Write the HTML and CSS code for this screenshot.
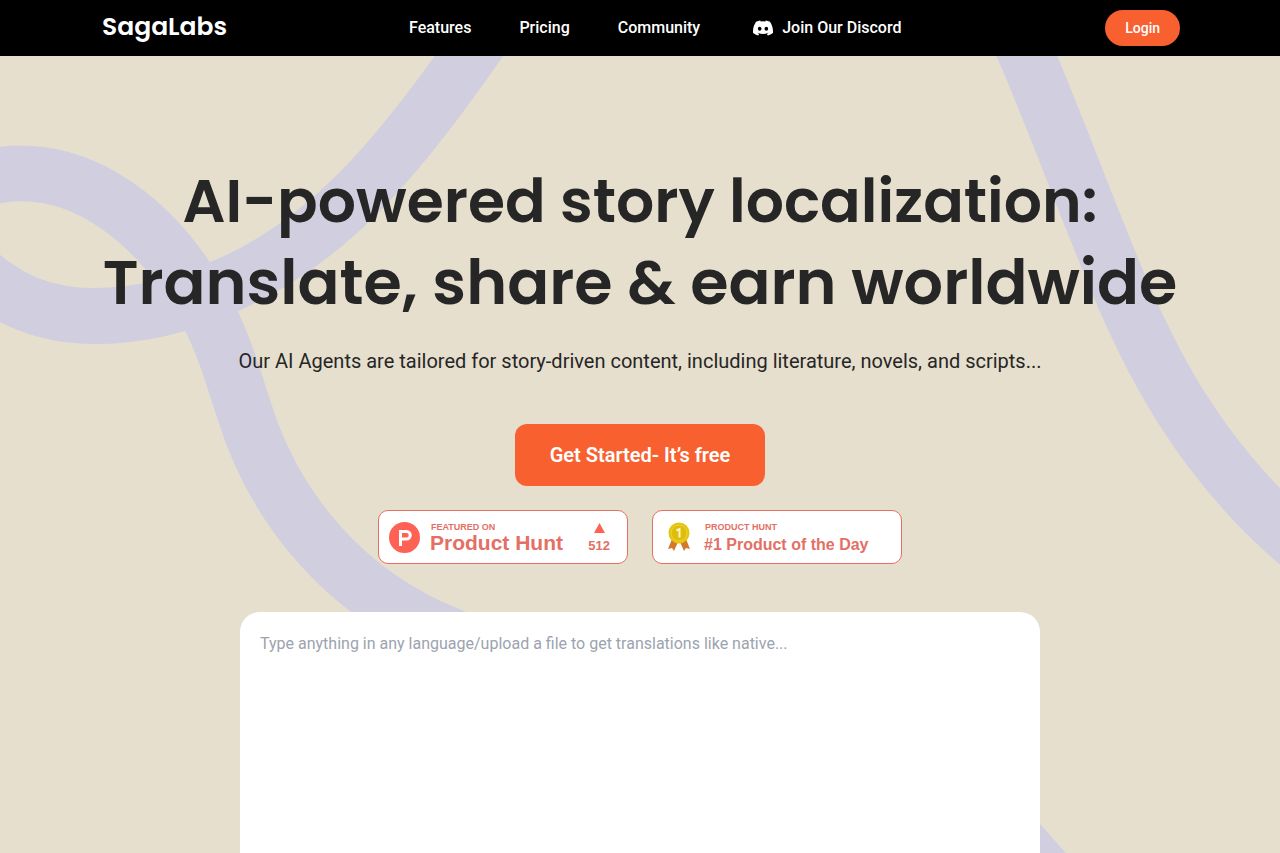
FILE: index.html
```
<!DOCTYPE html>
<html lang="en">
<head>
  <meta charset="UTF-8">
  <meta name="viewport" content="width=device-width, initial-scale=1">
  <title>SagaLabs</title>
  <link rel="stylesheet" href="styles.css">
</head>
<body>

  <header class="header">
    <a class="logo" href="#">SagaLabs</a>
    <nav class="nav">
      <a href="#">Features</a>
      <a href="#">Pricing</a>
      <a href="#">Community</a>
      <a class="discord" href="#">
        <svg width="20" height="16" viewBox="0 0 127 96" aria-hidden="true">
          <path fill="#fff" d="M107.700 8.070A105.150 105.150 0 0 0 81.470 0a72.060 72.060 0 0 0-3.360 6.830 97.680 97.680 0 0 0-29.110 0A72.370 72.370 0 0 0 45.640 0a105.890 105.890 0 0 0-26.250 8.090C2.790 32.650-1.710 56.600.540 80.210a105.730 105.730 0 0 0 32.170 16.150 77.700 77.700 0 0 0 6.890-11.110 68.420 68.420 0 0 1-10.850-5.180c.910-.660 1.800-1.340 2.660-2a75.570 75.570 0 0 0 64.320 0c.870.710 1.760 1.390 2.660 2a68.680 68.680 0 0 1-10.870 5.190 77 77 0 0 0 6.890 11.100 105.250 105.250 0 0 0 32.190-16.140c2.640-27.380-4.510-51.110-18.900-72.150zM42.450 65.690C36.180 65.690 31 60 31 53s5-12.740 11.430-12.740S54 46 53.890 53s-5.050 12.690-11.440 12.690zm42.240 0C78.410 65.690 73.250 60 73.250 53s5-12.740 11.440-12.740S96.230 46 96.120 53s-5.040 12.690-11.430 12.690z"/>
        </svg>
        Join Our Discord
      </a>
    </nav>
    <button class="login" type="button">Login</button>
  </header>

  <main class="hero">
    <svg class="ribbons" viewBox="0 56 1280 797" preserveAspectRatio="xMidYMin slice" aria-hidden="true">
      <g fill="none" stroke="#d1cfdf" stroke-width="56">
        <path d="M483 36L469 56C396 160 325 245 221 288C180 306 137 316 95 316C50 316 5 304 -40 255"/>
        <path d="M-20 178L0 175C80 163 162 220 212 322C228 355 234 381 244 410C270 495 330 580 430 627L470 644"/>
        <path d="M1018 36L1027 56C1056 125 1080 190 1107 256C1148 360 1200 460 1300 545"/>
        <path d="M990 810L1065 894"/>
      </g>
    </svg>

    <h1>
      <span class="line-top">AI-powered story localization:</span>
      <span>Translate, share &amp; earn worldwide</span>
    </h1>
    <p class="subtitle">Our AI Agents are tailored for story-driven content, including literature, novels, and scripts...</p>
    <button class="cta" type="button">Get Started- It’s free</button>

    <div class="badges">
      <a class="badge" href="#">
        <svg width="32" height="32" viewBox="0 0 32 32" aria-hidden="true">
          <circle cx="15.500" cy="15.500" r="15.500" fill="#ff6154"/>
          <path fill="#fff" fill-rule="evenodd" d="M10 8h7.500a5.250 5.250 0 0 1 0 10.500H13V24h-3zM13 11v4.500h4.500a2.250 2.250 0 0 0 0-4.500z"/>
        </svg>
        <span class="badge-text">
          <span class="badge-label">FEATURED ON</span>
          <span class="badge-name">Product Hunt</span>
        </span>
        <span class="votes">
          <svg width="11" height="10" viewBox="0 0 11 10" aria-hidden="true"><path d="M5.500 0L11 10H0z" fill="#ff6154"/></svg>
          512
        </span>
      </a>
      <a class="badge badge-day" href="#">
        <svg width="22" height="30" viewBox="0 0 22 30" aria-hidden="true">
          <path fill="#d5782a" d="M4 17L0 27l4-1 2 3 4-9zM18 17l4 10-4-1-2 3-4-9z"/>
          <circle cx="11" cy="11" r="10.500" fill="#e4c40d"/>
          <circle cx="11" cy="11" r="8" fill="#dfbd0b" stroke="#ead238"/>
          <path fill="none" stroke="#fff6c8" stroke-width="2" d="M8.500 8.500L11.500 7v8.500"/>
        </svg>
        <span class="badge-text">
          <span class="badge-label">PRODUCT HUNT</span>
          <span class="badge-name">#1 Product of the Day</span>
        </span>
      </a>
    </div>

    <textarea class="translate-box" aria-label="Text to translate" placeholder="Type anything in any language/upload a file to get translations like native..."></textarea>
  </main>

</body>
</html>
```
FILE: styles.css
```
:root {
  --accent: #f96030;
  --bg: #e6dfce;
  --text: #262626;
  --hunt: #e46f64;
}

* {
  box-sizing: border-box;
}

body {
  margin: 0;
  min-height: 100vh;
  display: flex;
  flex-direction: column;
  font-family: Roboto, sans-serif;
  background: var(--bg);
  color: var(--text);
}

a {
  text-decoration: none;
}

button {
  border: none;
  background: var(--accent);
  color: #fff;
  font-family: inherit;
  cursor: pointer;
}

.header {
  display: flex;
  align-items: center;
  height: 56px;
  padding: 0 100px;
  background: #000;
}

.logo {
  flex: 0 0 309px;
  padding: 0 0 2px 2px;
  color: #fff;
  font-family: Poppins, Lato, sans-serif;
  font-size: 25px;
  line-height: 32px;
  font-weight: 600;
}

.nav {
  display: flex;
  gap: 48px;
}

.nav a {
  color: #fff;
  font-size: 16px;
  line-height: 20px;
  font-weight: 500;
  white-space: nowrap;
}

.nav .discord {
  display: flex;
  align-items: center;
  gap: 9px;
  padding-left: 5px;
}

.login {
  margin-left: auto;
  height: 36px;
  padding: 0 20px;
  border-radius: 18px;
  font-size: 14px;
  font-weight: 500;
}

.hero {
  position: relative;
  flex: 1;
  display: flex;
  flex-direction: column;
  align-items: center;
  padding-top: 104px;
  overflow: hidden;
}

/* decorative curves behind the content */
.ribbons {
  position: absolute;
  inset: 0;
  z-index: -1;
  width: 100%;
  height: 100%;
}

h1 {
  margin: 0;
  font-family: Poppins, Inter, sans-serif;
  font-size: 62px;
  line-height: 82px;
  font-weight: 600;
  text-align: center;
}

h1 span {
  display: block;
}

h1 .line-top {
  font-size: 60px;
}

.subtitle {
  margin: 22px 0 48px;
  font-size: 20px;
  line-height: 30px;
  text-align: center;
}

.cta {
  width: 250px;
  height: 62px;
  border-radius: 12px;
  font-size: 20px;
  font-weight: 600;
}

.badges {
  display: flex;
  flex-wrap: wrap;
  justify-content: center;
  gap: 24px;
  margin: 24px 0 48px;
}

.badge {
  display: flex;
  align-items: center;
  width: 250px;
  height: 54px;
  padding: 2px 17px 0 10px;
  border: 1px solid var(--hunt);
  border-radius: 10px;
  background: #fff;
  color: var(--hunt);
  font-family: "Liberation Sans", Arial, sans-serif;
  font-weight: bold;
}

.badge-text {
  display: flex;
  flex-direction: column;
  margin-left: 9px;
}

.badge-label {
  padding-left: 1px;
  font-size: 9px;
  line-height: 10px;
}

.badge-name {
  font-size: 21px;
  line-height: 22px;
}

.votes {
  display: flex;
  flex-direction: column;
  align-items: center;
  gap: 5px;
  margin-left: auto;
  font-size: 13px;
  line-height: 15px;
}

.badge-day {
  padding-top: 4px;
  padding-left: 15px;
}

.badge-day svg {
  margin-bottom: 4px;
}

.badge-day .badge-text {
  margin-left: 14px;
}

.badge-day .badge-name {
  font-size: 16px;
  line-height: 25px;
}

.translate-box {
  flex: 1;
  width: 100%;
  max-width: 800px;
  min-height: 240px;
  padding: 20px;
  border: none;
  border-radius: 20px 20px 0 0;
  outline: none;
  resize: none;
  background: #fff;
  color: var(--text);
  font-family: inherit;
  font-size: 16px;
  line-height: 24px;
}

.translate-box::placeholder {
  color: #9ca3af;
}
```
